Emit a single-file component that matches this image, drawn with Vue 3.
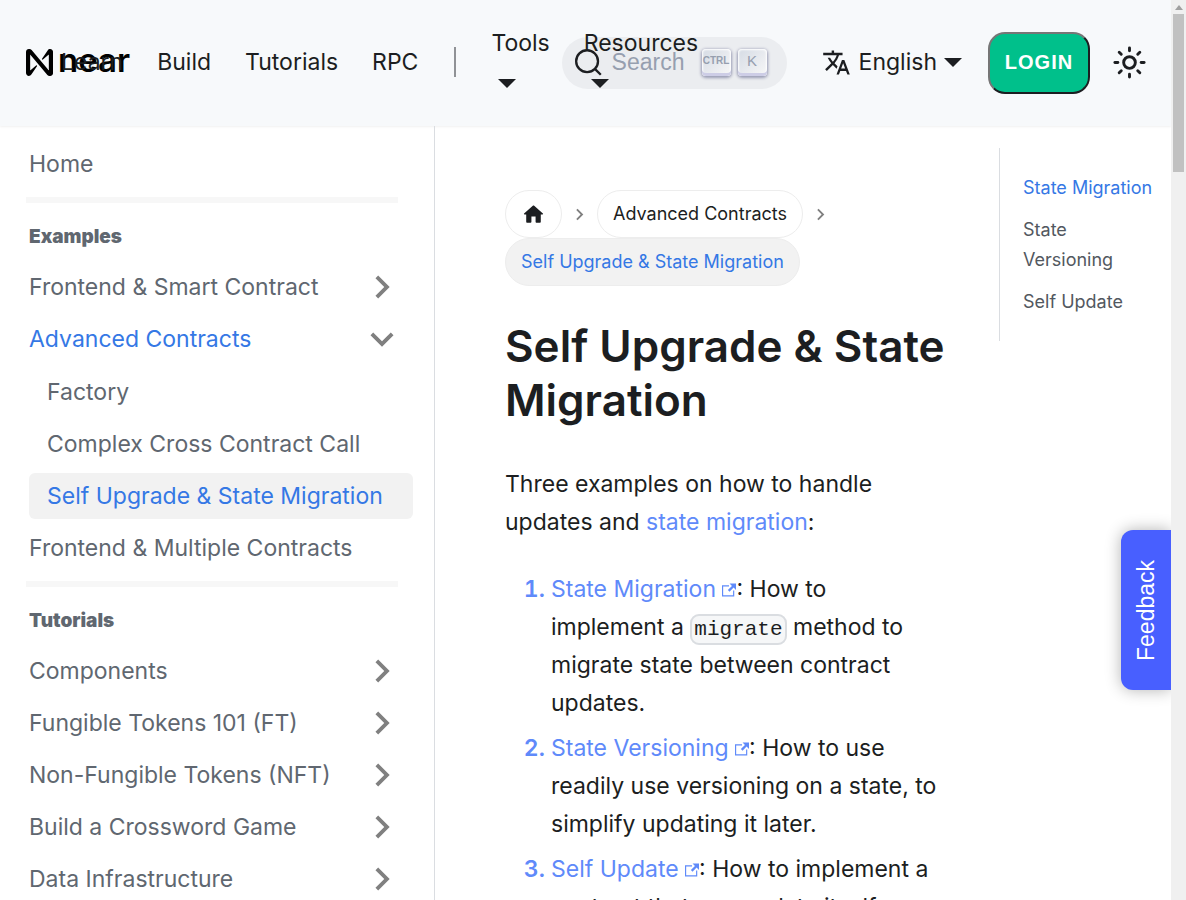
<script setup>
const navLinks = ['Learn', 'Build', 'Tutorials', 'RPC']
const navMenus = ['Tools', 'Resources']

const groups = [
  { title: '', items: [{ label: 'Home' }] },
  {
    title: 'Examples',
    items: [
      { label: 'Frontend & Smart Contract', arrow: 'right' },
      { label: 'Advanced Contracts', arrow: 'down', active: true },
      { label: 'Factory', child: true },
      { label: 'Complex Cross Contract Call', child: true },
      { label: 'Self Upgrade & State Migration', child: true, active: true, current: true },
      { label: 'Frontend & Multiple Contracts' },
    ],
  },
  {
    title: 'Tutorials',
    items: [
      { label: 'Components', arrow: 'right' },
      { label: 'Fungible Tokens 101 (FT)', arrow: 'right' },
      { label: 'Non-Fungible Tokens (NFT)', arrow: 'right' },
      { label: 'Build a Crossword Game', arrow: 'right' },
      { label: 'Data Infrastructure', arrow: 'right' },
    ],
  },
]

const toc = ['State Migration', 'State Versioning', 'Self Update']
const rays = [0, 45, 90, 135, 180, 225, 270, 315]
const externalIcon =
  'M21 13v10h-21v-19h12v2h-10v15h17v-8h2zm3-12h-10.988l4.035 4-6.977 7.07 2.828 2.828 6.977-7.07 4.125 4.172v-11z'
const chevron = 'M8.59 16.59L13.17 12 8.59 7.41 10 6l6 6-6 6z'
</script>

<template>
  <div class="page">
    <div class="site">
      <header class="navbar">
        <nav class="nav-left" aria-label="Main">
          <a class="brand" href="#">
            <svg class="mark" viewBox="0 0 90 90" aria-hidden="true">
              <path d="M72.2,4.6L53.4,32.5c-1.3,1.9,1.2,4.2,3,2.6L74.9,19c0.5-0.4,1.2-0.1,1.2,0.6v50.3c0,0.7-0.9,1-1.3,0.5l-56-67C17,1.2,14.4,0,11.5,0h-2C4.3,0,0,4.3,0,9.6v70.8C0,85.7,4.3,90,9.6,90c3.3,0,6.4-1.7,8.2-4.6l18.8-27.9c1.3-1.9-1.2-4.2-3-2.6l-18.5,16c-0.5,0.4-1.2,0.1-1.2-0.6V20.1c0-0.7,0.9-1,1.3-0.5l56,67c1.8,2.2,4.5,3.4,7.3,3.4h2c5.3,0,9.6-4.3,9.6-9.6V9.6c0-5.3-4.3-9.6-9.6-9.6C77.1,0,74,1.7,72.2,4.6z" />
            </svg>
            <span class="wordmark">near</span>
          </a>
          <a v-for="l in navLinks" :key="l" class="nav-item" href="#">{{ l }}</a>
          <span class="divider"></span>
          <a v-for="m in navMenus" :key="m" class="nav-item menu" href="#">{{ m }}<i class="caret"></i></a>
        </nav>

        <button class="search" type="button" aria-label="Search">
          <svg class="lens" viewBox="0 0 20 20" aria-hidden="true">
            <path d="M14.386 14.386l4.088 4.088-4.088-4.088A7.533 7.533 0 1 1 3.733 3.733a7.533 7.533 0 0 1 10.653 10.653z" />
          </svg>
          <span class="search-text">Search</span>
          <kbd class="key ctrl">CTRL</kbd>
          <kbd class="key">K</kbd>
        </button>

        <div class="nav-right">
          <button class="lang" type="button">
            <svg class="translate" viewBox="0 0 24 24" aria-hidden="true">
              <path d="M12.87 15.07l-2.54-2.51.03-.03c1.74-1.94 2.98-4.17 3.71-6.53H17V4h-7V2H8v2H1v1.99h11.17C11.5 7.92 10.44 9.75 9 11.35 8.07 10.32 7.3 9.19 6.69 8h-2c.73 1.63 1.73 3.17 2.98 4.56l-5.09 5.02L4 19l5-5 3.11 3.11.76-2.04zM18.5 10h-2L12 22h2l1.12-3h4.75L21 22h2l-4.5-12zm-2.62 7l1.62-4.33L19.12 17h-3.24z" />
            </svg>
            English<i class="caret"></i>
          </button>
          <button class="login" type="button">LOGIN</button>
          <button class="theme" type="button" aria-label="Switch theme">
            <svg class="sun" viewBox="0 0 24 24" aria-hidden="true">
              <circle cx="12" cy="12" r="4" />
              <path v-for="r in rays" :key="r" d="M12 2v2" :transform="`rotate(${r} 12 12)`" />
            </svg>
          </button>
        </div>
      </header>

      <div class="body">
        <aside class="sidebar">
          <section v-for="g in groups" :key="g.title" class="group">
            <h2 v-if="g.title" class="group-title">{{ g.title }}</h2>
            <a
              v-for="i in g.items"
              :key="i.label"
              href="#"
              class="side-item"
              :class="{ child: i.child, active: i.active, current: i.current }"
            >
              {{ i.label }}
              <svg v-if="i.arrow" class="arrow" :class="i.arrow" viewBox="0 0 24 24" aria-hidden="true">
                <path :d="chevron" />
              </svg>
            </a>
          </section>
        </aside>

        <main class="article">
          <nav class="crumbs" aria-label="Breadcrumbs">
            <a class="pill" href="#" aria-label="Home page">
              <svg class="home" viewBox="0 0 24 24" aria-hidden="true">
                <path d="M10 19v-5h4v5c0 .55.45 1 1 1h3c.55 0 1-.45 1-1v-7h1.7c.46 0 .68-.57.33-.87L12.67 3.6c-.38-.34-.96-.34-1.34 0l-8.36 7.53c-.34.3-.13.87.33.87H5v7c0 .55.45 1 1 1h3c.55 0 1-.45 1-1z" />
              </svg>
            </a>
            <svg class="sep" viewBox="0 0 24 24" aria-hidden="true"><path :d="chevron" /></svg>
            <a class="pill" href="#">Advanced Contracts</a>
            <svg class="sep" viewBox="0 0 24 24" aria-hidden="true"><path :d="chevron" /></svg>
            <span class="pill here">Self Upgrade &amp; State Migration</span>
          </nav>

          <h1>Self Upgrade &amp; State Migration</h1>
          <p>Three examples on how to handle updates and <a href="#">state migration</a>:</p>
          <ol>
            <li>
              <a href="#">State Migration <svg class="ext" viewBox="0 0 24 24" aria-hidden="true"><path :d="externalIcon" /></svg></a>: How to implement a <code>migrate</code> method to migrate state between contract updates.
            </li>
            <li>
              <a href="#">State Versioning <svg class="ext" viewBox="0 0 24 24" aria-hidden="true"><path :d="externalIcon" /></svg></a>: How to use readily use versioning on a state, to simplify updating it later.
            </li>
            <li>
              <a href="#">Self Update <svg class="ext" viewBox="0 0 24 24" aria-hidden="true"><path :d="externalIcon" /></svg></a>: How to implement a contract that can update itself.
            </li>
          </ol>
        </main>

        <nav class="toc" aria-label="On this page">
          <a v-for="(t, n) in toc" :key="t" href="#" :class="{ active: n === 0 }">{{ t }}</a>
        </nav>
      </div>
      <button class="feedback" type="button">Feedback</button>
    </div>

    <div class="scrollbar" aria-hidden="true">
      <i class="scroll-up"></i>
      <i class="thumb"></i>
    </div>
  </div>
</template>

<style>
body {
  margin: 0;
  background: #fff;
}
</style>

<style scoped>
* {
  box-sizing: border-box;
}
.page {
  display: flex;
  height: 100vh;
  overflow: hidden;
  font: 400 23px/38px Inter, sans-serif;
  color: #1c1e21;
  text-rendering: optimizeLegibility;
}
a {
  color: inherit;
  text-decoration: none;
}
button {
  font: inherit;
  color: inherit;
  background: none;
  border: 0;
  padding: 0;
}
svg {
  fill: currentColor;
  flex: none;
}
.site {
  position: relative;
  flex: 1;
  min-width: 0;
  display: flex;
  flex-direction: column;
  overflow: hidden;
}

/* Top bar */
.navbar {
  flex: none;
  display: flex;
  align-items: center;
  height: 126px;
  padding: 0 24px 0 26px;
  background: #f7f9fb;
  box-shadow: 0 1px 2px rgba(0, 0, 0, 0.06);
}
.nav-left {
  flex: 1;
  min-width: 0;
  display: flex;
  align-items: center;
  padding-bottom: 2px;
}
.brand {
  flex: none;
  display: flex;
  align-items: center;
  gap: 5px;
  width: 18px;
  color: #000;
}
.mark {
  width: 27px;
  height: 27px;
}
.wordmark {
  padding-bottom: 4px;
  font-size: 33px;
  font-weight: 600;
}
.nav-item {
  flex: none;
  padding: 0 17px;
}
.menu {
  position: relative;
  z-index: 1;
  display: flex;
  flex-direction: column;
  padding-bottom: 12px;
}
.caret {
  display: inline-block;
  width: 0;
  height: 0;
  border: 9px solid transparent;
  border-top-color: currentColor;
  border-bottom: 0;
}
.menu .caret {
  margin: 17px 0 0 7px;
}
.divider {
  flex: none;
  width: 2px;
  height: 30px;
  margin: 0 18px 0 19px;
  background: #909296;
}
.search {
  flex: none;
  display: flex;
  align-items: center;
  height: 52px;
  width: 225px;
  padding: 0 20px 2px 12px;
  border-radius: 26px;
  background: #ebedf0;
  font: 23px "Liberation Sans", Arial, sans-serif;
  color: #969faf;
}
.lens {
  width: 29px;
  height: 29px;
  fill: none;
  stroke: #1c1e21;
  stroke-width: 1.6;
}
.search-text {
  flex: 1;
  padding-left: 9px;
  text-align: left;
}
.key {
  flex: none;
  display: flex;
  align-items: center;
  justify-content: center;
  width: 29px;
  height: 27px;
  margin-left: 7px;
  padding-bottom: 4px;
  border-radius: 4px;
  background: linear-gradient(-225deg, #d5dbe4, #f8f8f8);
  box-shadow: inset 0 -3px 0 #cdcde6, inset 0 0 2px 1px #fff, 0 1px 3px 1px rgba(30, 35, 90, 0.4);
  font: 15px "Liberation Sans", Arial, sans-serif;
  color: #969faf;
}
.ctrl {
  font: bold 10px "Liberation Sans Narrow", "Liberation Sans", sans-serif;
}
.nav-right {
  flex: none;
  display: flex;
  align-items: center;
  margin-left: 35px;
}
.lang {
  display: flex;
  align-items: center;
  padding-bottom: 2px;
}
.translate {
  width: 29px;
  height: 29px;
  margin-right: 8px;
}
.lang .caret {
  margin-left: 7px;
}
.login {
  width: 102px;
  height: 62px;
  margin: 0 22px 0 26px;
  padding-bottom: 2px;
  border: 2px solid;
  border-color: #767676 #1c1e21 #1c1e21 #767676;
  border-radius: 17px;
  background: #00c08b;
  color: #fff;
  font: bold 20px "Liberation Sans", Arial, sans-serif;
  letter-spacing: 1px;
}
.theme {
  display: flex;
  padding-bottom: 2px;
}
.sun {
  width: 35px;
  height: 35px;
  fill: none;
  stroke: currentColor;
  stroke-width: 2;
  stroke-linecap: round;
}

/* Columns below the bar */
.body {
  flex: 1;
  min-height: 0;
  display: grid;
  grid-template-columns: 435px minmax(0, 1fr) 172px;
  align-items: start;
}
.sidebar {
  align-self: stretch;
  padding: 15px 21px 0 26px;
  border-right: 1px solid #dadde1;
  color: #606770;
  line-height: 30px;
  overflow: hidden;
}
.group + .group::before {
  content: "";
  display: block;
  height: 6px;
  margin: 10px 15px 0 0;
  background: #f7f7f7;
}
.group-title {
  margin: 0;
  padding: 19px 3px 12px;
  font-size: 19px;
  font-weight: 900;
}
.side-item {
  display: flex;
  align-items: center;
  justify-content: space-between;
  height: 46px;
  margin-left: 3px;
  padding-right: 8px;
  border-radius: 6px;
  white-space: nowrap;
}
.side-item + .side-item {
  margin-top: 6px;
}
.active + .side-item.child {
  margin-top: 7px;
}
.child {
  padding-left: 18px;
}
.active {
  color: #3578e5;
}
.current {
  background: #f2f2f2;
}
.arrow {
  width: 46px;
  height: 46px;
  color: #808080;
}
.down {
  transform: rotate(90deg);
}
.article {
  padding: 64px 54px 0 70px;
}
.crumbs {
  display: flex;
  flex-wrap: wrap;
  align-items: center;
}
.pill {
  display: flex;
  align-items: center;
  height: 48px;
  padding: 0 15px;
  border: 1px solid #ededed;
  border-radius: 24px;
  font-size: 18px;
}
.here {
  background: #f2f2f2;
  color: #3578e5;
}
.home {
  width: 25px;
  height: 25px;
}
.sep {
  width: 23px;
  height: 23px;
  margin: 0 6px;
  color: #808080;
}
h1 {
  margin: 33px 0 38px;
  font-size: 44px;
  line-height: 54px;
  font-weight: 600;
}
p {
  margin: 0 0 29px;
}
p a,
li a {
  color: #5f8afa;
}
ol {
  margin: 0;
  padding-left: 46px;
}
li + li {
  margin-top: 7px;
}
li::marker {
  color: #5f8afa;
  font-weight: 600;
}
.ext {
  width: 14px;
  height: 14px;
}
code {
  padding: 2px;
  border: 2px solid #dadde1;
  border-radius: 9px;
  background: #f6f7f8;
  font: 21px "Liberation Mono", monospace;
}
.toc {
  display: flex;
  flex-direction: column;
  gap: 12px;
  margin-top: 22px;
  padding: 25px 12px 24px 23px;
  border-left: 1px solid #dadde1;
  color: #525860;
  font-size: 18px;
  line-height: 30px;
}
.toc .active {
  color: #3578e5;
}

/* Tab pinned over the right edge */
.feedback {
  position: absolute;
  right: 0;
  top: 530px;
  width: 50px;
  height: 160px;
  border-radius: 0 12px 12px 0;
  background: #485fff;
  box-shadow: 0 0 16px rgba(0, 0, 0, 0.3);
  color: #fff;
  font: 23px "Liberation Sans", Arial, sans-serif;
  writing-mode: vertical-rl;
  transform: rotate(180deg);
}

.scrollbar {
  flex: none;
  width: 15px;
  background: #f0f0f0;
}
.scroll-up {
  display: block;
  width: 0;
  margin: 5px auto 4px;
  border: 4px solid transparent;
  border-top: 0;
  border-bottom: 5px solid #a0a0a0;
}
.thumb {
  display: block;
  height: 158px;
  margin: 0 2px;
  background: #c1c1c1;
}
</style>
